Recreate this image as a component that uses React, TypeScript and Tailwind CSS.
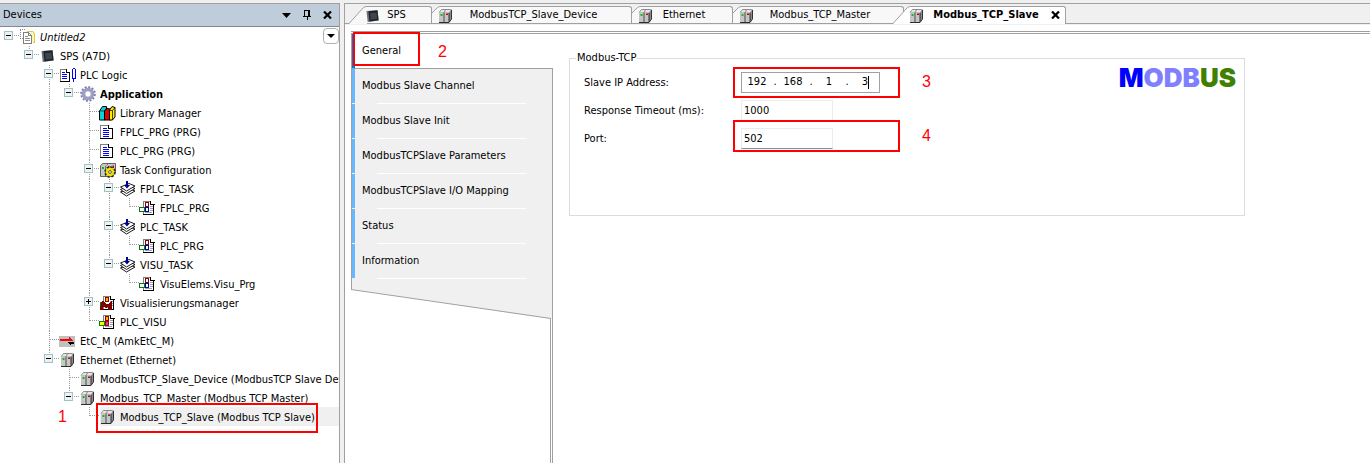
import { useState } from "react";
import type { ReactNode } from "react";
import clsx from "clsx";

type IconName =
  | "project" | "chip" | "logic" | "gear" | "books" | "doc" | "taskconf"
  | "task" | "call" | "visumgr" | "visu" | "ethercat" | "server";

interface TreeNode {
  label: string;
  icon: IconName;
  children?: TreeNode[];
  collapsed?: boolean;
  selected?: boolean;
  style?: string;
}

const TREE: TreeNode = {
  label: "Untitled2",
  icon: "project",
  style: "italic",
  children: [
    {
      label: "SPS (A7D)",
      icon: "chip",
      children: [
        {
          label: "PLC Logic",
          icon: "logic",
          children: [
            {
              label: "Application",
              icon: "gear",
              style: "font-bold",
              children: [
                { label: "Library Manager", icon: "books" },
                { label: "FPLC_PRG (PRG)", icon: "doc" },
                { label: "PLC_PRG (PRG)", icon: "doc" },
                {
                  label: "Task Configuration",
                  icon: "taskconf",
                  children: [
                    { label: "FPLC_TASK", icon: "task", children: [{ label: "FPLC_PRG", icon: "call" }] },
                    { label: "PLC_TASK", icon: "task", children: [{ label: "PLC_PRG", icon: "call" }] },
                    { label: "VISU_TASK", icon: "task", children: [{ label: "VisuElems.Visu_Prg", icon: "call" }] },
                  ],
                },
                { label: "Visualisierungsmanager", icon: "visumgr", collapsed: true, children: [] },
                { label: "PLC_VISU", icon: "visu" },
              ],
            },
          ],
        },
        { label: "EtC_M (AmkEtC_M)", icon: "ethercat" },
        {
          label: "Ethernet (Ethernet)",
          icon: "server",
          children: [
            { label: "ModbusTCP_Slave_Device (ModbusTCP Slave Dev", icon: "server" },
            {
              label: "Modbus_TCP_Master (Modbus TCP Master)",
              icon: "server",
              children: [
                { label: "Modbus_TCP_Slave (Modbus TCP Slave)", icon: "server", selected: true },
              ],
            },
          ],
        },
      ],
    },
  ],
};

const PAGES = [
  "General",
  "Modbus Slave Channel",
  "Modbus Slave Init",
  "ModbusTCPSlave Parameters",
  "ModbusTCPSlave I/O Mapping",
  "Status",
  "Information",
];

function PageShape() {
  return (
    <>
      <path d="M3 1h8l3 3v11H3z" fill="#fff" />
      <path d="M3.500 15V1.500h7" fill="none" stroke="#808080" />
      <path d="M10.500 1v3.500h4M13.500 4v11M3 14.500h11" fill="none" stroke="#000" />
      <path d="M10 6.500h3M10 8.500h3M10 10.500h3M5 12.500h7" stroke="#a0a0a0" />
    </>
  );
}

const ICONS: Record<IconName, ReactNode> = {
  project: (
    <>
      <path d="M7 2h6l2 2v9H7z" fill="#fdf6a8" />
      <path d="M7 2.500h5.500l2 2v8.500h-2" fill="none" stroke="#d8c860" />
      <path d="M0 .5h6M.5 1v9M0 9.500h3" fill="none" stroke="#888" strokeDasharray="1 1" />
      <path d="M3 3h6l3 3v9H3z" fill="#fff" />
      <path d="M3.500 3.500h5l3 3v8h-8zM8.500 3.500v3h3" fill="none" stroke="#808080" />
      <path d="M5 7.500h3M5 9.500h5M5 11.500h5" stroke="#909090" />
    </>
  ),
  chip: (
    <g shapeRendering="geometricPrecision">
      <path d="M1.500 3l11-1 1.200 10.500-11 1.500z" fill="#6c7078" />
      <path d="M3.500 3.200l9-.8 1 9.800-9 1.200z" fill="#1d2027" />
      <path d="M5 5l6.500-.6.700 6.600-6.500.8z" fill="#3f444e" />
    </g>
  ),
  logic: (
    <>
      <path d="M0 2h6l3 3v9H0z" fill="#fff" />
      <path d="M.5 14V2.500h6" fill="none" stroke="#808080" />
      <path d="M6.500 2v3.500h3M9.500 5v9.500H0" fill="none" stroke="#000" />
      <path d="M2 5.500h3M2 7.500h5M2 9.500h5M2 11.500h5" stroke="#00f" />
      <path d="M12.500 2v9.500M15.500 2v9.500M13 1.500h2M13 11.500h2" stroke="#00f" />
      <path d="M13.500 12v3" stroke="#00f" />
    </>
  ),
  gear: (
    <g shapeRendering="geometricPrecision">
      <circle cx="8" cy="8" r="6.800" fill="none" stroke="#7c7cae" strokeWidth="2" strokeDasharray="2 1.560" />
      <circle cx="8" cy="8" r="4.800" fill="none" stroke="#9c9cc8" strokeWidth="3" />
      <circle cx="8" cy="8" r="3.200" fill="#fff" stroke="#74749c" strokeWidth=".6" />
    </g>
  ),
  books: (
    <g shapeRendering="geometricPrecision">
      <path d="M-.5 6l3-4.500h4V5L5 8v7H-.5z" fill="#00d8d8" stroke="#000" />
      <path d="M0 6h4.500L7 2" fill="none" stroke="#000" strokeWidth=".6" />
      <path d="M4.500 6L7 3.500l3.500.5v11h-6z" fill="#e00000" stroke="#000" />
      <path d="M9.500 5L12 1.500l3 1V12l-2.500 3h-3z" fill="#ffee00" stroke="#000" />
      <path d="M12.500 15V5.500l2.500-3M9.500 5.500h3" fill="none" stroke="#000" strokeWidth=".7" />
    </g>
  ),
  doc: (
    <>
      <path d="M0 1h9l3 3v11H0z" fill="#fff" />
      <path d="M.5 15V1.500h8" fill="none" stroke="#808080" />
      <path d="M8.500 1v3.500h4M12.500 4v11M0 14.500h13" fill="none" stroke="#000" />
      <path d="M3 4.500h4M3 6.500h6M3 8.500h6M3 10.500h6M3 12.500h6" stroke="#00f" />
    </>
  ),
  taskconf: (
    <g shapeRendering="geometricPrecision">
      <path d="M.5 4l2-2.500h13v9l-3 4H.5z" fill="#c8c8c8" stroke="#606060" />
      <path d="M5.500 4v10M6.500 3.500l2-2M10.500 4v6" stroke="#707070" fill="none" />
      <path d="M2 5h2v2H2z" fill="#00c000" />
      <path d="M8 4h1.500v2H8zM12.500 3.500H14V6h-1.500z" fill="#d00000" />
      <circle cx="10" cy="10" r="4.300" fill="none" stroke="#302c00" strokeWidth="3" strokeDasharray="1.900 1.470" />
      <circle cx="10" cy="10" r="3" fill="none" stroke="#f0e000" strokeWidth="2.400" />
      <circle cx="10" cy="10" r="1.400" fill="#fff" stroke="#302c00" strokeWidth=".7" />
    </g>
  ),
  task: (
    <g shapeRendering="geometricPrecision" fill="#fff" stroke="#000" strokeWidth=".9">
      <path d="M.5 11L9 7.500l6 2.500-8.500 5z" />
      <path d="M.5 8.500L9 5l6 2.500-8.500 5z" />
      <path d="M.5 6L9 2.500 15 5l-8.500 5z" />
      <path d="M6 0h2v4h2L7 7.500 4 4h2z" fill="#000090" stroke="none" />
    </g>
  ),
  call: (
    <>
      <PageShape />
      <path d="M5.500 2.500h3v4h-3z" fill="#fff" stroke="#900000" />
      <path d="M5.500 7.500h3v4h-3z" fill="#fff" stroke="#0000c0" />
      <path d="M-.5 7.500h5v4h-5z" fill="#fff" stroke="#008000" />
    </>
  ),
  visumgr: (
    <>
      <PageShape />
      <path d="M5.500 2.500h3v4h-3z" fill="#ffb000" stroke="#900000" />
      <path d="M0 15V7l3-1 3 3h2l3-3 1 1v8H8v-3l-2 1-3-1v3z" fill="#800000" />
      <path d="M0 7h1v4H0z" fill="#008000" />
    </>
  ),
  visu: (
    <>
      <PageShape />
      <path d="M5.500 2.500h3v4h-3z" fill="#ffb000" stroke="#900000" />
      <path d="M5.500 7.500h3v4h-3z" fill="#ff3060" stroke="#a00040" />
      <path d="M-.5 7.500h5v4h-5z" fill="#ffff00" stroke="#008000" />
    </>
  ),
  ethercat: (
    <>
      <path d="M-1 3h16v11H-1z" fill="#c0c0c0" />
      <path d="M0 6h10v2H0zM9 4l5 4H9z" fill="#f00" />
      <path d="M14 9H7l4 4v-2h3z" fill="#000" />
    </>
  ),
  server: (
    <g shapeRendering="geometricPrecision">
      <path d="M1 5l3-4h9.500v10L10.500 15H1z" fill="#9a9a9a" />
      <path d="M1 4.500L3.500 1.500h3.500L5.500 4.500zM6.500 4.500L8.500 1.500h4.500L11 4.500z" fill="#e6e6e6" />
      <path d="M1 5h4.500v9H1zM6.500 5H11v9H6.500z" fill="#c6c6c6" />
      <path d="M11 5l2-2.500v8L11 13.500z" fill="#8a8a8a" />
      <path d="M6 4.500V14" stroke="#606060" />
      <path d="M1 4.500L3.500 1.500h9" fill="none" stroke="#808080" strokeWidth=".8" />
      <path d="M1 14.500h10l2.500-3.500V2M11 5v9" fill="none" stroke="#202020" strokeWidth=".9" />
      <path d="M2.500 6h2v2h-2z" fill="#00c800" />
      <path d="M8 5.500h2v1.500H8z" fill="#c00020" />
    </g>
  ),
};

function Icon({ name }: { name: IconName }) {
  return (
    <svg viewBox="0 0 16 16" className="size-4 shrink-0 overflow-visible" shapeRendering="crispEdges" aria-hidden="true">
      {ICONS[name]}
    </svg>
  );
}

function CloseIcon() {
  return (
    <svg viewBox="0 0 9 8" className="h-2 w-[9px]" aria-hidden="true">
      <path d="M1 .5l7 7M8 .5l-7 7" stroke="#000" strokeWidth="2.200" />
    </svg>
  );
}

// One 20x19 cell of the dotted guide lines left of a tree item
function Guide({ up, down, across, box }: { up?: boolean; down?: boolean; across?: boolean; box?: "+" | "-" }) {
  return (
    <svg viewBox="0 0 20 19" className="h-[19px] w-5 shrink-0" shapeRendering="crispEdges" aria-hidden="true">
      <g stroke="#9a9a9a" strokeDasharray="1 1">
        {up && <path d="M9.500 0v9" />}
        {down && <path d="M9.500 8v11" />}
        {across && <path d="M10 8.500h9" />}
      </g>
      {box && (
        <>
          <rect x="4.500" y="4.500" width="8" height="8" fill="#f0f2f2" stroke="#9cc4c8" />
          <path d="M6 8.500h5" stroke="#000" />
          {box === "+" && <path d="M8.500 6v5" stroke="#000" />}
        </>
      )}
    </svg>
  );
}

interface TreeItemProps {
  node: TreeNode;
  trail: boolean[];
  last: boolean;
}

function TreeItem({ node, trail, last }: TreeItemProps) {
  const [open, setOpen] = useState(!node.collapsed);
  const root = trail.length === 0;

  return (
    <li>
      <div className="flex h-[19px] items-center">
        {trail.map((line, i) => (
          <Guide key={i} up={line} down={line} />
        ))}
        {node.children ? (
          <button type="button" onClick={() => setOpen(!open)} aria-expanded={open} aria-label={`Toggle ${node.label}`}>
            <Guide up={!root} down={!last} across box={open ? "-" : "+"} />
          </button>
        ) : (
          <Guide up down={!last} across />
        )}
        <div className={clsx("relative flex h-[19px] items-center gap-1", node.selected && "flex-1 bg-[#f0f0f0]")}>
          <Icon name={node.icon} />
          <span className={clsx("pt-0.5 whitespace-nowrap", node.style)}>{node.label}</span>
          {node.selected && (
            <>
              <Marker className="-top-1 -left-1 h-[30px] w-[222px]" />
              <Step className="-left-[42px]">1</Step>
            </>
          )}
        </div>
      </div>
      {open && node.children && (
        <ul>
          {node.children.map((child, i) => (
            <TreeItem
              key={child.label}
              node={child}
              trail={[...trail, !last]}
              last={i === node.children!.length - 1}
            />
          ))}
        </ul>
      )}
    </li>
  );
}

function Marker({ className }: { className: string }) {
  return <div className={clsx("pointer-events-none absolute border-2 border-[#f00]", className)} />;
}

function Step({ className, children }: { className: string; children: ReactNode }) {
  return (
    <span className={clsx("pointer-events-none absolute font-['Liberation_Sans',sans-serif] text-base leading-5 text-[#f00]", className)}>
      {children}
    </span>
  );
}

function DevicesPanel() {
  return (
    <aside className="flex w-[340px] shrink-0 flex-col overflow-hidden border-t border-r border-[#a0a0a0] bg-white">
      <header className="flex h-[23px] items-center border-b border-[#808890] bg-[#bfcddb] pr-[7px] pl-[3px]">
        <h2 className="flex-1">Devices</h2>
        <div className="flex items-center gap-3">
          <button type="button" aria-label="Window menu">
            <svg viewBox="0 0 9 5" className="h-[5px] w-[9px]"><path d="M0 0h9L4.500 5z" /></svg>
          </button>
          <button type="button" aria-label="Pin panel">
            <svg viewBox="0 0 8 10" className="h-2.5 w-2" shapeRendering="crispEdges">
              <path d="M1 .5h6M1.500 0v6M0 6.500h8M4 7v3" stroke="#000" fill="none" />
              <path d="M5 0h2v6H5z" />
            </svg>
          </button>
          <button type="button" aria-label="Close panel">
            <CloseIcon />
          </button>
        </div>
      </header>
      <div className="relative flex-1">
        <ul>
          <TreeItem node={TREE} trail={[]} last />
        </ul>
        <button
          type="button"
          aria-label="Tree options"
          className="absolute top-px right-0 flex size-4 items-center justify-center rounded-sm border border-[#b0b0b0] bg-white"
        >
          <svg viewBox="0 0 8 4" className="h-1 w-2"><path d="M0 0h8L4 4z" /></svg>
        </button>
      </div>
    </aside>
  );
}

interface TabProps {
  label: string;
  icon: IconName;
  className: string;
  active?: boolean;
  slanted?: boolean;
}

function Tab({ label, icon, className, active, slanted }: TabProps) {
  return (
    <div
      role="tab"
      aria-selected={!!active}
      className={clsx("relative flex h-[18px] shrink-0 items-center", active ? "z-10 font-bold" : "border-b border-[#a0a0a0]", className)}
    >
      {slanted ? (
        <svg viewBox="0 0 18 18" className="absolute top-0 left-0 size-[18px]" aria-hidden="true">
          <path d="M0 18L14 2q1-1.500 4-1.500V18z" fill={active ? "#fff" : "#f8f8f8"} />
          <path d="M0 17.500L14 2q1-1.500 4-1.500" fill="none" stroke="#a0a0a0" />
        </svg>
      ) : (
        <svg viewBox="0 0 18 18" className="absolute top-0 left-0 size-[18px]" aria-hidden="true">
          <path d="M0 17V7L5 2q1-1.500 4-1.500h9V17z" fill="#f8f8f8" />
          <path d="M0 7L5 2q1-1.500 4-1.500h9" fill="none" stroke="#a0a0a0" />
        </svg>
      )}
      <div
        className={clsx(
          "absolute inset-y-0 right-0 left-[18px] rounded-tr-[3px] border-t border-r border-[#a0a0a0]",
          active ? "bg-white" : "bg-[#f8f8f8]"
        )}
      />
      <span className="relative pt-0.5"><Icon name={icon} /></span>
      <button type="button" className="relative flex-1 text-center whitespace-nowrap">{label}</button>
      {active && (
        <button type="button" aria-label="Close tab" className="relative ml-1">
          <CloseIcon />
        </button>
      )}
    </div>
  );
}

function TabBar() {
  return (
    <div className="flex h-[22px] items-end border-t border-[#a0a0a0] bg-[#f0f0f0] pb-px" role="tablist">
      <div className="w-1 self-end border-b border-[#a0a0a0]" />
      <Tab label="SPS" icon="chip" slanted className="w-[83px] pr-5 pl-4" />
      <Tab label="ModbusTCP_Slave_Device" icon="server" className="w-[200px] pr-[19px] pl-1.5" />
      <Tab label="Ethernet" icon="server" className="w-[101px] pr-[19px] pl-1.5" />
      <Tab label="Modbus_TCP_Master" icon="server" className="w-[171px] pr-[19px] pl-1.5" />
      <Tab label="Modbus_TCP_Slave" icon="server" active slanted className="-ml-[11px] w-[173px] pr-1.5 pl-4" />
      <div className="flex-1 border-b border-[#a0a0a0]" />
    </div>
  );
}

function PageNav() {
  const [page, setPage] = useState(PAGES[0]);

  return (
    <nav className="relative flex w-[202px] shrink-0 flex-col">
      {PAGES.map((name) => {
        const current = name === page;
        return (
          <button
            key={name}
            type="button"
            onClick={() => setPage(name)}
            className={clsx(
              "relative flex h-[35px] items-center border-l border-[#a0a0a0] text-left",
              current ? "border-b bg-white" : "border-r bg-[#f0f0f0]"
            )}
          >
            <span className={clsx("mr-[7px] w-[3px] self-stretch", current ? "bg-[#0078d7]" : "mb-px bg-[#66b8ff]")} />
            <span className={clsx(!current && "pb-0.5")}>{name}</span>
            {!current && <span className="absolute right-[26px] bottom-0 left-[25px] h-px bg-white" />}
          </button>
        );
      })}
      <div className="h-2.5 border-x border-[#a0a0a0] bg-[#f0f0f0]" />
      <div className="flex flex-1 flex-col border-r border-[#a0a0a0]">
        <svg viewBox="0 0 201 30" preserveAspectRatio="none" className="h-[30px] w-full" aria-hidden="true">
          <path d="M0 0h201v30h-2z" fill="#f0f0f0" />
          <path d="M0 .5l200 29" fill="none" stroke="#a0a0a0" />
        </svg>
        <div className="mr-px flex-1 border-r border-[#a0a0a0]" />
      </div>
      <Marker className="-top-0.5 left-0.5 h-[34px] w-[67px]" />
      <Step className="top-2 left-[87px]">2</Step>
    </nav>
  );
}

function IpAddress() {
  const [octets, setOctets] = useState(["192", "168", "1", "3"]);

  return (
    <div role="group" aria-labelledby="ip-label" className="relative flex h-[21px] w-fit items-center border border-[#a0a0a8] pl-px">
      {octets.map((octet, i) => (
        <div key={i} className="flex items-center">
          {i > 0 && <span className="w-2 text-center">.</span>}
          <input
            value={octet}
            maxLength={3}
            aria-label={`Octet ${i + 1}`}
            onChange={(e) => setOctets(octets.map((o, j) => (j === i ? e.target.value : o)))}
            className="w-7 bg-transparent text-center outline-none"
          />
        </div>
      ))}
      <span className="absolute right-2.5 h-[13px] w-px bg-black" />
    </div>
  );
}

function GeneralPage() {
  return (
    <main className="min-w-0 flex-1 pt-4 pl-4">
      <fieldset className="relative h-[166px] w-full max-w-[676px] border border-[#dcdcdc] px-3.5">
        <legend className="-ml-2 px-px leading-4">Modbus-TCP</legend>
        <div className="grid grid-cols-[157px_1fr] items-center pt-0.5">
          <span id="ip-label" className="pt-0.5">Slave IP Address:</span>
          <div className="relative flex h-7 items-center">
            <IpAddress />
            <Marker className="-top-px -left-2 h-[31px] w-[167px]" />
            <Step className="left-[181px]">3</Step>
          </div>
          <label htmlFor="timeout" className="pt-0.5">Response Timeout (ms):</label>
          <div className="flex h-7 items-center">
            <input id="timeout" defaultValue="1000" className="h-[21px] w-[92px] border border-[#ececec] px-0.5 outline-none" />
          </div>
          <label htmlFor="port" className="pt-0.5">Port:</label>
          <div className="relative flex h-7 items-center">
            <input id="port" defaultValue="502" className="h-[21px] w-[92px] border border-[#ececec] border-b-[#8c8c94] px-0.5 outline-none" />
            <Marker className="-top-1 -left-2 h-8 w-[167px]" />
            <Step className="top-0.5 left-[181px]">4</Step>
          </div>
        </div>
        <div className="absolute -top-1 right-2 font-[Inter,sans-serif] text-[26px] leading-8 font-black">
          <span className="text-[#0000ff]">M</span>
          <span className="text-[#8080ff]">ODB</span>
          <span className="text-[#408000]">US</span>
        </div>
      </fieldset>
    </main>
  );
}

export default function App() {
  return (
    <div className="flex min-h-screen gap-1 bg-[#f0f0f0] pt-[3px] font-['DejaVu_Sans_Condensed','DejaVu_Sans',sans-serif] text-[11px] leading-[14px] text-black">
      <DevicesPanel />
      <section className="flex min-w-0 flex-1 flex-col border-l border-[#a0a0a0] bg-white">
        <TabBar />
        <div className="mt-1.5 ml-1.5 flex flex-1 flex-col border-t border-[#a0a0a0]">
          <div className="mt-px border-t border-[#a0a0a0]" />
          <div className="flex flex-1">
            <PageNav />
            <GeneralPage />
          </div>
        </div>
      </section>
    </div>
  );
}
